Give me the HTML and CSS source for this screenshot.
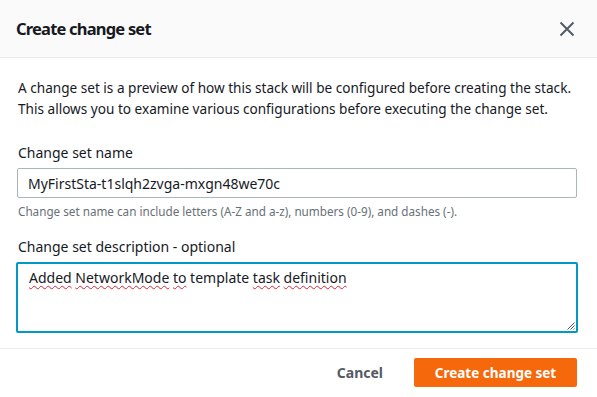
FILE: index.html
```html
<!DOCTYPE html>
<html lang="en">
<head>
  <meta charset="UTF-8" />
  <title>Create change set</title>
  <link rel="stylesheet" href="styles.css">
</head>
<body>
  <div class="modal">
    <div class="modal-header">
      <div class="modal-title">Create change set</div>
      <button class="close-btn" aria-label="Close">
        <svg width="16" height="16" viewBox="0 0 16 16"><path d="M1.5 1.5l13 13M14.5 1.5l-13 13" stroke="#545b64" stroke-width="2" fill="none"/></svg>
      </button>
    </div>

    <div class="modal-body">
      <p class="intro">A change set is a preview of how this stack will be configured before creating the stack.<br>This allows you to examine various configurations before executing the change set.</p>

      <div class="field">
        <label class="label" for="csName">Change set name</label>
        <input id="csName" class="input" type="text" value="MyFirstSta-t1slqh2zvga-mxgn48we70c" />
        <div class="hint">Change set name can include letters (A-Z and a-z), numbers (0-9), and dashes (-).</div>
      </div>

      <div class="field">
        <label class="label">Change set description - optional</label>
        <div class="textarea" role="textbox" contenteditable="true" spellcheck="false"><span class="typo">Added</span> <span class="typo">NetworkMode</span> <span class="typo">to</span> template <span class="typo">task</span> <span class="typo">definition</span>
          <svg class="grip" width="9" height="9" viewBox="0 0 9 9"><path d="M8.5 1.5l-7 7M8.5 4.5l-4 4M8.5 7.5l-1 1" stroke="#555" stroke-width="1" fill="none"/></svg>
        </div>
      </div>
    </div>

    <div class="modal-footer">
      <button class="btn-link">Cancel</button>
      <button class="btn-primary">Create change set</button>
    </div>
  </div>
</body>
</html>
```

FILE: styles.css
```css
body { margin: 0; font-family: "Noto Sans", sans-serif; color: #16191f; background: #fff; }
.modal { width: 597px; }
.modal-header {
  background: #fafafa;
  border-bottom: 1px solid #eaeded;
  height: 57px;
  padding: 0 22px 0 16px;
  display: flex;
  align-items: center;
  justify-content: space-between;
}
.modal-title { font-size: 16.5px; font-weight: bold; letter-spacing: -0.8px; }
.close-btn { background: none; border: none; padding: 0; display: flex; cursor: pointer; }
.modal-body { padding: 19px 20px 15px 18px; border-bottom: 1px solid #eaeded; }
.intro { margin: 0 0 24px; font-size: 13.6px; line-height: 21px; }
.field { margin-bottom: 18px; }
.field:last-child { margin-bottom: 0; }
.label { display: block; font-size: 14px; line-height: 20px; margin-bottom: 5px; }
.input {
  display: block;
  box-sizing: border-box;
  width: 560px;
  height: 30px;
  margin-left: -1px;
  border: 1px solid #aab7b8;
  border-radius: 2px;
  padding: 0 10px;
  font-family: inherit;
  font-size: 14px;
  color: #16191f;
}
.hint { font-size: 11.7px; color: #687078; margin-top: 5px; line-height: 16px; }
.textarea {
  position: relative;
  box-sizing: border-box;
  width: 562px;
  height: 71px;
  margin-left: -2px;
  border: 2px solid #0099c4;
  border-radius: 2px;
  padding: 4px 11px;
  font-size: 14px;
  line-height: 20px;
  color: #16191f;
  outline: none;
}
.typo { text-decoration: underline wavy #d6263b; text-decoration-thickness: 1px; text-underline-offset: 2px; }
.grip { position: absolute; right: 1px; bottom: 1px; }
.modal-footer {
  display: flex;
  justify-content: flex-end;
  align-items: center;
  gap: 31px;
  padding: 9px 20px;
}
.btn-link { background: none; border: none; padding: 0; font-family: inherit; font-weight: bold; font-size: 14px; color: #545b64; cursor: pointer; }
.btn-primary {
  background: #f5680c;
  color: #fff;
  border: none;
  border-radius: 2px;
  height: 29px;
  width: 163px;
  font-family: inherit;
  font-weight: bold;
  font-size: 13.5px;
  cursor: pointer;
}
```
